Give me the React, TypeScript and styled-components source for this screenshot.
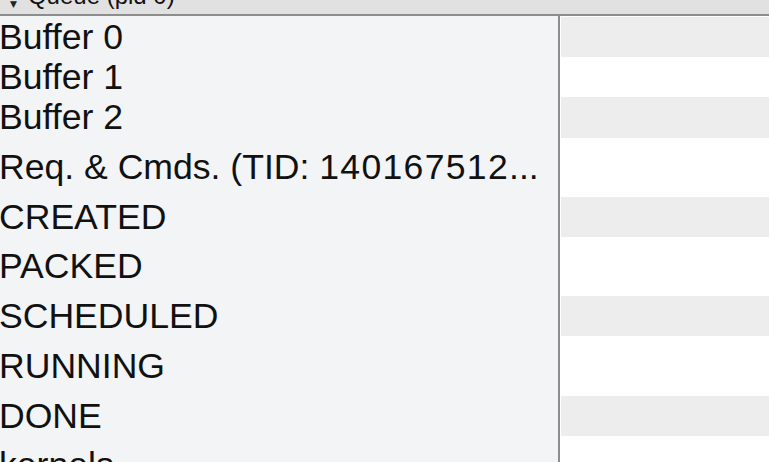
import React, { FC } from "react";
import styled, { createGlobalStyle } from "styled-components";

const GlobalStyle = createGlobalStyle`
  html, body {
    margin: 0;
    padding: 0;
    overflow: hidden;
    background: #ffffff;
  }
  body {
    font-family: "Liberation Sans", Arial, sans-serif;
    color: #111111;
  }
`;

interface TrackItem {
  label: string;
  tid?: string;
  spaced?: boolean;
}

const tracks: TrackItem[] = [
  { label: "Buffer 0" },
  { label: "Buffer 1" },
  { label: "Buffer 2" },
  { label: "Req. & Cmds. (TID: ", tid: "140167512", spaced: true },
  { label: "CREATED", spaced: true },
  { label: "PACKED", spaced: true },
  { label: "SCHEDULED", spaced: true },
  { label: "RUNNING", spaced: true },
  { label: "DONE", spaced: true },
  { label: "kernels", spaced: true },
];

const StyledPage = styled.div`
  width: 769px;
  height: 462px;
  overflow: hidden;
  display: flex;
  flex-direction: column;
`;

const StyledGroupHeader = styled.div`
  height: 14px;
  flex: 0 0 auto;
  display: flex;
  align-items: flex-end;
  gap: 11px;
  padding-left: 10px;
  background: #e1e1e1;
  border-bottom: 2px solid #8d8d8d;
  overflow: hidden;
`;

const StyledCaret = styled.span`
  font-family: "DejaVu Sans", sans-serif;
  font-size: 9px;
  line-height: 12px;
  margin-bottom: 4px;
  color: #222222;
`;

const StyledGroupTitle = styled.span`
  font-size: 24px;
  line-height: 28px;
  margin-bottom: 4px;
  white-space: nowrap;
`;

const StyledBody = styled.div`
  flex: 1;
  display: flex;
  min-height: 0;
`;

const StyledLabels = styled.div`
  width: 558px;
  flex: 0 0 auto;
  padding-top: 1px;
  background: #f3f4f6;
  border-right: 2px solid #8d8d8d;
  overflow: hidden;
`;

const StyledLabel = styled.div<{ $spaced?: boolean }>`
  height: 40.2px;
  line-height: 40.2px;
  margin-top: ${(p) => (p.$spaced ? "9.5px" : "0")};
  margin-left: -1px;
  font-size: 35.6px;
  white-space: nowrap;
  overflow: hidden;
`;

const StyledTid = styled.span`
  letter-spacing: 1.3px;
`;

const StyledTracks = styled.div`
  flex: 1;
  padding-top: 1px;
  padding-left: 1px;
`;

const StyledTrack = styled.div<{ $spaced?: boolean; $striped: boolean }>`
  height: 40.2px;
  margin-top: ${(p) => (p.$spaced ? "9.5px" : "0")};
  background: ${(p) => (p.$striped ? "#ededed" : "#ffffff")};
`;

const App: FC = () => {
  return (
    <StyledPage>
      <GlobalStyle />
      <StyledGroupHeader>
        <StyledCaret>▼</StyledCaret>
        <StyledGroupTitle>Queue (pid 0)</StyledGroupTitle>
      </StyledGroupHeader>
      <StyledBody>
        <StyledLabels>
          {tracks.map((t) => (
            <StyledLabel key={t.label} $spaced={t.spaced}>
              {t.label}
              {t.tid && (
                <>
                  <StyledTid>{t.tid}</StyledTid>...
                </>
              )}
            </StyledLabel>
          ))}
        </StyledLabels>
        <StyledTracks>
          {tracks.map((t, i) => (
            <StyledTrack key={t.label} $spaced={t.spaced} $striped={i % 2 === 0} />
          ))}
        </StyledTracks>
      </StyledBody>
    </StyledPage>
  );
};

export default App;
